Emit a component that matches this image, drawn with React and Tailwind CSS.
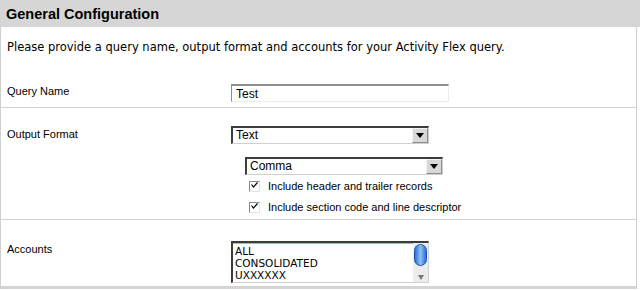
import { useState } from 'react'

const arial = { fontFamily: '"Liberation Sans", Arial, sans-serif' }
const verdana = { fontFamily: '"DejaVu Sans", Verdana, sans-serif' }

// Flèche de liste déroulante, façon bouton classique
function ArrowButton() {
  return (
    <div className="w-[16px] h-full flex items-center justify-center bg-[#d8d8d8] border-l border-t border-[#f4f4f4] border-r border-b border-r-[#8c8c8c] border-b-[#8c8c8c]">
      <svg width="8" height="5" viewBox="0 0 8 5"><path d="M0 0h8L4 5z" fill="#000" /></svg>
    </div>
  )
}

function Select({ value, className = '' }) {
  return (
    <div className={`w-[198px] flex items-stretch bg-white border-t-2 border-l-2 border-[#3c3c3c] border-r border-b border-r-[#d0d0d0] border-b-[#d0d0d0] ${className}`}>
      <div className="flex-1 pl-[3px] text-[12px] leading-[15px] text-black" style={arial}>{value}</div>
      <ArrowButton />
    </div>
  )
}

function Checkbox({ label, checked }) {
  return (
    <div className="flex items-center h-[21px]">
      <div className="w-[11px] h-[11px] relative bg-white border-t border-l border-[#8a8a8a] border-r border-b border-r-[#e4e4e4] border-b-[#e4e4e4]">
        {checked && (
          <svg className="absolute left-[1px] top-[0px]" width="7" height="6" viewBox="0 0 7 6">
            <path d="M0.5 2.5L2.5 5L6.5 0.5" stroke="#000" strokeWidth="1.2" fill="none" />
          </svg>
        )}
      </div>
      <span className="ml-[8px] text-[11px] text-black" style={arial}>{label}</span>
    </div>
  )
}

export default function App() {
  const [nom, setNom] = useState('Test')
  return (
    <div className="w-[640px] h-[290px] bg-white overflow-hidden">
      <div className="h-[27px] bg-[#d6d6d6] flex items-center pl-[6px]">
        <h1 className="text-[14.5px] font-bold text-black leading-none mt-[1px]" style={arial}>General Configuration</h1>
      </div>

      <div className="w-[637px] border-l border-r border-[#cfcfcf]">
        <div className="h-[42px] pl-[6px] pt-[13px]">
          <p className="text-[11.5px] leading-[14px] text-black" style={verdana}>
            Please provide a query name, output format and accounts for your Activity Flex query.
          </p>
        </div>

        <div className="h-[39px] flex border-b border-[#d0d0d0]">
          <div className="w-[230px] pl-[6px] pt-[16px] text-[11px] leading-[13px] text-black" style={arial}>Query Name</div>
          <div className="pt-[15px]">
            <input
              value={nom}
              onChange={e => setNom(e.target.value)}
              className="block w-[218px] h-[18px] pl-[4px] text-[12px] text-black bg-white outline-none border-t-2 border-l border-[#8e8e8e] border-r border-b border-r-[#ececec] border-b-[#ececec]"
              style={arial}
            />
          </div>
        </div>

        <div className="h-[112px] flex border-b border-[#d0d0d0]">
          <div className="w-[230px] pl-[6px] pt-[20px] text-[11px] leading-[13px] text-black" style={arial}>Output Format</div>
          <div className="pt-[18px] flex flex-col">
            <Select value="Text" className="h-[18px]" />
            <Select value="Comma" className="h-[18px] ml-[14px] mt-[13px]" />
            <div className="ml-[18px] mt-[1px]">
              <Checkbox label="Include header and trailer records" checked />
              <Checkbox label="Include section code and line descriptor" checked />
            </div>
          </div>
        </div>

        <div className="h-[69px] flex border-b-[3px] border-[#d4d4d4]">
          <div className="w-[230px] pl-[6px] pt-[23px] text-[11px] leading-[13px] text-black" style={arial}>Accounts</div>
          <div className="pt-[21px]">
            <div className="w-[198px] h-[42px] flex bg-white border-t-2 border-l-2 border-[#3c3c3c] border-r border-b border-r-[#d0d0d0] border-b-[#d0d0d0]">
              <div className="flex-1 border-t border-[#9ccf6e] pl-[2px] pt-[1px] text-[10.5px] leading-[12px] text-black" style={verdana}>
                <div>ALL</div>
                <div>CONSOLIDATED</div>
                <div>UXXXXXX</div>
              </div>
              <div className="w-[15px] bg-[#ececec] flex flex-col items-center justify-between pb-[2px]">
                <div className="w-[13px] h-[22px] mt-[1px] rounded-full bg-gradient-to-r from-[#2a6fd6] via-[#8ec1f5] to-[#2a6fd6] border border-[#1d56b0]" />
                <svg width="6" height="5" viewBox="0 0 6 5"><path d="M0 0h6L3 5z" fill="#777" /></svg>
              </div>
            </div>
          </div>
        </div>
      </div>
    </div>
  )
}
